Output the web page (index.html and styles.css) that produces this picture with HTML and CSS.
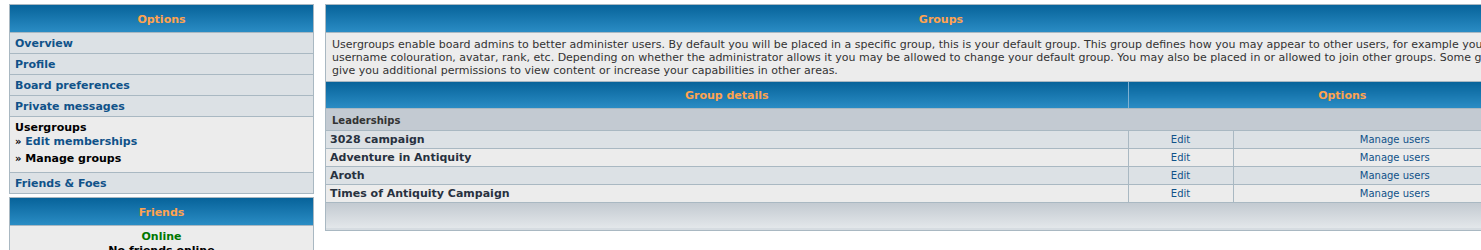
FILE: index.html
```html
<!DOCTYPE html>
<html>
<head>
<meta charset="utf-8">
<title>Groups</title>
<link rel="stylesheet" href="styles.css">
</head>
<body>
<div class="layout">
  <div class="sidebar">
    <div class="panel">
      <div class="cat">Options</div>
      <div class="nav-row"><a class="nav-link">Overview</a></div>
      <div class="nav-row"><a class="nav-link">Profile</a></div>
      <div class="nav-row"><a class="nav-link">Board preferences</a></div>
      <div class="nav-row"><a class="nav-link">Private messages</a></div>
      <div class="nav-active">
        <div class="nav-title">Usergroups</div>
        <div class="nav-sub"><span class="raquo">&raquo;</span> <a class="nav-link">Edit memberships</a></div>
        <div class="nav-sub nav-current"><span class="raquo">&raquo;</span> Manage groups</div>
      </div>
      <div class="nav-row nav-last"><a class="nav-link">Friends &amp; Foes</a></div>
    </div>
    <div class="panel">
      <div class="cat">Friends</div>
      <div class="friends">
        <div class="online">Online</div>
        <div class="none">No friends online</div>
      </div>
    </div>
  </div>
  <div class="main panel">
    <div class="cat">Groups</div>
    <div class="desc">Usergroups enable board admins to better administer users. By default you will be placed in a specific group, this is your default group. This group defines how you may appear to other users, for example your<br>username colouration, avatar, rank, etc. Depending on whether the administrator allows it you may be allowed to change your default group. You may also be placed in or allowed to join other groups. Some groups may<br>give you additional permissions to view content or increase your capabilities in other areas.</div>
    <table class="groups">
      <colgroup><col class="c-name"><col class="c-edit"><col class="c-manage"></colgroup>
      <thead>
        <tr><th>Group details</th><th colspan="2">Options</th></tr>
      </thead>
      <tbody>
        <tr class="sect"><td colspan="3">Leaderships</td></tr>
        <tr class="r1"><td class="gname">3028 campaign</td><td class="act"><a>Edit</a></td><td class="act"><a>Manage users</a></td></tr>
        <tr class="r2"><td class="gname">Adventure in Antiquity</td><td class="act"><a>Edit</a></td><td class="act"><a>Manage users</a></td></tr>
        <tr class="r1"><td class="gname">Aroth</td><td class="act"><a>Edit</a></td><td class="act"><a>Manage users</a></td></tr>
        <tr class="r2"><td class="gname">Times of Antiquity Campaign</td><td class="act"><a>Edit</a></td><td class="act"><a>Manage users</a></td></tr>
      </tbody>
    </table>
    <div class="foot"></div>
  </div>
</div>
</body>
</html>
```
FILE: styles.css
```css
html { overflow: hidden; }
body {
  margin: 0;
  padding: 4px 0 0 9px;
  font-family: Verdana, "DejaVu Sans", sans-serif;
  font-size: 11px;
  color: #333;
  background: #fff;
}
.layout {
  display: flex;
  align-items: flex-start;
  gap: 11px;
  width: 1700px;
}
.sidebar {
  width: 305px;
  flex: none;
  display: flex;
  flex-direction: column;
  gap: 3px;
}
.panel {
  border: 1px solid #a9b8c2;
  background: #dce1e5;
}
.cat {
  height: 25px;
  padding-top: 2px;
  background: linear-gradient(#07639a, #2a8cc4);
  color: #ffa34f;
  font-weight: bold;
  font-size: 11px;
  display: flex;
  align-items: center;
  justify-content: center;
  border-bottom: 1px solid #a9b8c2;
}
.nav-row {
  height: 20px;
  border-bottom: 1px solid #a9b8c2;
  padding-left: 5px;
  display: flex;
  align-items: center;
}
.nav-row.nav-last { border-bottom: 0; }
.nav-link {
  color: #105289;
  font-weight: bold;
  text-decoration: none;
}
.nav-active {
  background: #ececec;
  border-bottom: 1px solid #a9b8c2;
  padding: 4px 5px 6px;
  font-weight: bold;
  color: #000;
}
.nav-title { line-height: 14px; }
.nav-sub { line-height: 14px; }
.nav-sub.nav-current { margin-top: 3px; }
.raquo { color: #000; font-size: 10px; }
.friends {
  background: #ececec;
  text-align: center;
  font-weight: bold;
  padding-top: 4px;
  height: 60px;
}
.online { color: #007700; line-height: 14px; }
.none { color: #000; line-height: 14px; }

.main {
  width: 1230px;
  flex: none;
  background: #ececec;
}
.desc {
  padding: 5px 6px 4px;
  line-height: 13px;
  white-space: nowrap;
  color: #333;
  border-bottom: 1px solid #a9b8c2;
}
.groups {
  width: 100%;
  border-collapse: collapse;
  table-layout: fixed;
}
.c-name { width: 802px; }
.c-edit { width: 105px; }
.groups th {
  height: 26px;
  padding: 0;
  background: linear-gradient(#07639a, #2a8cc4);
  color: #ffa34f;
  font-weight: bold;
  font-size: 11px;
  border-left: 1px solid #7fb1d2;
  border-bottom: 1px solid #a9b8c2;
}
.groups th:first-child { border-left: 0; }
.groups td { padding: 0; }
.groups .sect td {
  height: 20px;
  padding: 1px 0 0 6px;
  background: #c3cad2;
  font-weight: bold;
  font-size: 10px;
  border-bottom: 1px solid #a9b8c2;
}
.r1 td { background: #dce1e5; }
.r2 td { background: #ececec; }
.r1 td, .r2 td {
  height: 17px;
  border-bottom: 1px solid #a9b8c2;
  border-left: 1px solid #a9b8c2;
}
.gname {
  font-weight: bold;
  padding-left: 4px !important;
  color: #28313f;
  border-left: 0 !important;
}
.act {
  text-align: center;
  font-size: 10px;
}
.act a { color: #105289; }
.foot {
  height: 25px;
  background: linear-gradient(#c3cad1, #e3e7ea);
  border-bottom: 2px solid #d6dce1;
}
```
